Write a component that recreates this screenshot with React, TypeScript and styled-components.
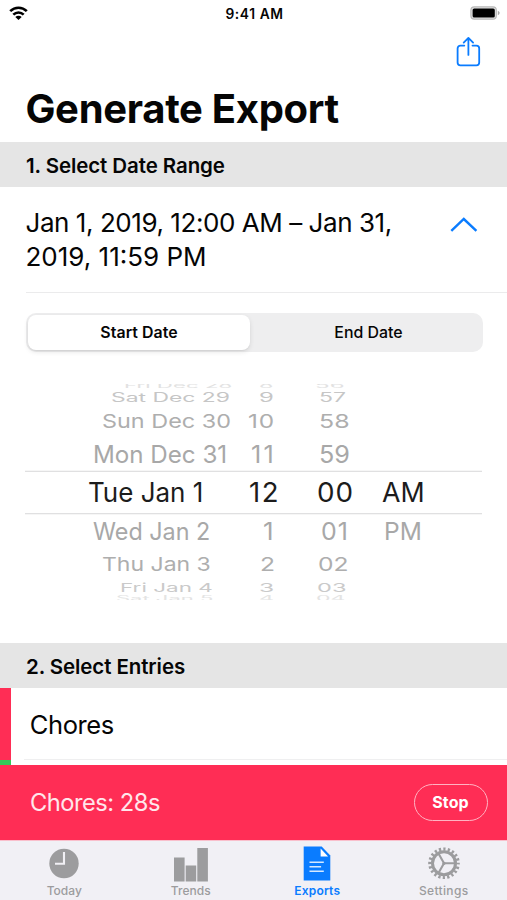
import React from "react";
import styled, { createGlobalStyle, css } from "styled-components";

const BLUE = "#0a7cff";
const RED = "#ff2d55";
const GRAY = "#9c9c9e";

const GlobalStyle = createGlobalStyle`
  *, *::before, *::after { box-sizing: border-box; }
  body {
    margin: 0;
    background: #fff;
    color: #050505;
    font-family: Inter, "Liberation Sans", sans-serif;
  }
  svg { display: block; }
  button { font: inherit; color: inherit; background: none; border: 0; padding: 0; }
`;

const Screen = styled.main`
  width: 507px;
  height: 900px;
  display: flex;
  flex-direction: column;
  overflow: hidden;
  background: #fff;
`;

const StatusBar = styled.div`
  flex: none;
  height: 28px;
  display: grid;
  grid-template-columns: 1fr auto 1fr;
  align-items: center;
  padding: 0 6px 0 9px;
`;

const Clock = styled.time`
  font-size: 13.8px;
  font-weight: 600;
  line-height: 28px;
  letter-spacing: 0.6px;
  padding-right: 1px;
`;

const BatterySlot = styled.div`
  justify-self: end;
  padding-bottom: 2px;
`;

const WifiSlot = styled.div`
  padding-bottom: 2px;
`;

const NavBar = styled.div`
  flex: none;
  height: 51px;
  display: flex;
  justify-content: flex-end;
  padding: 8px 25px 0 0;
`;

const IconButton = styled.button`
  width: 27px;
  height: 32px;
`;

const Title = styled.h1`
  flex: none;
  margin: 0;
  height: 63px;
  padding-left: 25.4px;
  font-size: 40px;
  font-weight: 700;
  letter-spacing: -0.3px;
  line-height: 59px;
`;

const SectionHeader = styled.h2<{ $height: number }>`
  flex: none;
  margin: 0;
  height: ${(p) => p.$height}px;
  padding-left: 26px;
  background: #e5e5e5;
  font-size: 20.5px;
  font-weight: 600;
  line-height: 47px;
  letter-spacing: -0.09px;
`;

const RangeRow = styled.div`
  flex: none;
  height: 106px;
  margin-left: 26px;
  padding: 19px 29px 0 0;
  display: flex;
  justify-content: space-between;
  border-bottom: 1px solid #ebebec;
`;

const RangeText = styled.div`
  font-size: 26px;
  line-height: 34.2px;
  white-space: nowrap;
  margin-left: -0.5px;
`;

const RangeLine = styled.div<{ $tracking: number }>`
  letter-spacing: ${(p) => p.$tracking}px;
`;

const ChevronSlot = styled.div`
  padding-top: 10px;
`;

const Segmented = styled.div`
  flex: none;
  height: 39px;
  margin: 20px 24px 0 26px;
  padding: 2px;
  display: grid;
  grid-template-columns: 222px 1fr;
  border-radius: 10px;
  background: #eeeeef;
`;

const Segment = styled.button<{ $active?: boolean }>`
  height: 35px;
  border-radius: 8px;
  font-size: 15.9px;
  font-weight: 500;
  letter-spacing: 0;
  line-height: 35px;
  text-align: center;
  padding-left: 6px;
  ${(p) =>
    p.$active &&
    css`
      background: #fff;
      padding-left: 0;
      font-weight: 600;
      letter-spacing: 0.05px;
      box-shadow: 0 2px 5px rgba(0, 0, 0, 0.1), 0 1px 1px rgba(0, 0, 0, 0.04);
    `}
`;

const Wheel = styled.div`
  flex: none;
  height: 216px;
  margin: 32px 25px 43px;
  overflow: hidden;
`;

const WheelRow = styled.div<{ $height: number; $squash: number; $tone: string; $selected?: boolean }>`
  height: ${(p) => p.$height}px;
  display: grid;
  grid-template-columns: 160px 70px 65px 1fr;
  padding-left: 55px;
  color: ${(p) => p.$tone};
  font-size: 26.5px;
  line-height: ${(p) => p.$height}px;
  white-space: nowrap;
  --squash: ${(p) => p.$squash};
  &:first-child { margin-top: -2px; }
  ${(p) =>
    p.$selected &&
    css`
      box-shadow: inset 0 1px #e0e0e1, inset 0 -1px #e0e0e1, 0 0 0 1px #f6f6f6;
    `}
`;

const WheelCell = styled.span<{ $inset: number; $stretch: number; $tracking?: number }>`
  justify-self: start;
  margin-left: ${(p) => p.$inset}px;
  letter-spacing: ${(p) => p.$tracking ?? 0}px;
  transform: scale(${(p) => p.$stretch}, var(--squash));
  transform-origin: left center;
`;

const EntryList = styled.div`
  flex: 1;
  min-height: 0;
  overflow: hidden;
`;

const Entry = styled.div<{ $color: string }>`
  height: 72px;
  display: flex;
  padding-left: 13px;
  border-left: 11px solid ${(p) => p.$color};
`;

const EntryName = styled.div`
  flex: 1;
  padding-left: 5.8px;
  border-bottom: 1px solid #efeff0;
  font-size: 25.5px;
  letter-spacing: -0.4px;
  line-height: 74px;
`;

const TimerBar = styled.div`
  flex: none;
  height: 75px;
  padding: 0 19px 0 30px;
  display: flex;
  align-items: center;
  justify-content: space-between;
  background: ${RED};
  color: #fff;
`;

const TimerText = styled.div`
  font-size: 23.7px;
  letter-spacing: -0.5px;
  color: #ffe6eb;
`;

const StopButton = styled.button`
  width: 74px;
  height: 37px;
  border: 1.5px solid #ffb3c2;
  border-radius: 19px;
  font-size: 16px;
  font-weight: 700;
  letter-spacing: 0.15px;
  line-height: 33px;
  text-align: center;
  padding-right: 1px;
`;

const TabBar = styled.nav`
  flex: none;
  height: 60px;
  display: grid;
  grid-template-columns: repeat(4, 126.5px);
  border-top: 1px solid #f9bfcc;
  background: #f1f0f5;
`;

const Tab = styled.div<{ $active?: boolean; $tracking: number }>`
  display: flex;
  flex-direction: column;
  align-items: center;
  padding: 5px 0 0 2px;
  color: ${(p) => (p.$active ? BLUE : GRAY)};
  font-size: 12px;
  font-weight: ${(p) => (p.$active ? 600 : 500)};
  letter-spacing: ${(p) => p.$tracking}px;
  line-height: 18px;
`;

const WifiIcon = () => (
  <svg width="19" height="14" viewBox="0 0 19 14" fill="none" stroke="#000" strokeWidth="2.6">
    <path d="M1.2 5.2C5.9.5 13.1.5 17.8 5.2" />
    <path d="M4.3 8.6c3-2.9 7.4-2.9 10.4 0" />
    <path d="M9.5 14 6.300 10.900c1.800-1.600 4.600-1.600 6.400 0Z" fill="#000" stroke="none" />
  </svg>
);

const BatteryIcon = () => (
  <svg width="31" height="14" viewBox="0 0 31 14">
    <rect x="0.9" y="0.8" width="25.4" height="12.4" rx="3.4" fill="#e4e4e4" stroke="#b9b9b9" strokeWidth="1.2" />
    <rect x="2.6" y="2.5" width="22.2" height="9" rx="1.6" fill="#000" />
    <path d="M27.8 4.8c2.4.8 2.4 3.6 0 4.4Z" fill="#aaa" />
  </svg>
);

const ShareIcon = () => (
  <svg width="27" height="32" viewBox="0 0 27 32" fill="none" stroke={BLUE} strokeWidth="1.8" strokeLinecap="round" strokeLinejoin="round">
    <path d="M9.3 9.6H5.4a2.8 2.8 0 0 0-2.8 2.8v14.2a2.8 2.8 0 0 0 2.8 2.8h16a2.8 2.8 0 0 0 2.8-2.8V12.4a2.8 2.8 0 0 0-2.8-2.8h-3.9" />
    <path d="M13.4 18.9V2.2M8.7 6.600l4.700-4.700 4.700 4.700" />
  </svg>
);

const ChevronUp = () => (
  <svg width="28" height="17" viewBox="0 0 28 17" fill="none" stroke={BLUE} strokeWidth="2.4">
    <path d="M1.300 14.800 13.800 3 26.400 14.800" />
  </svg>
);

const TodayIcon = () => (
  <svg width="34" height="36" viewBox="0 0 34 36">
    <circle cx="17" cy="17.500" r="14.700" fill={GRAY} />
    <path d="M17 6v11.700H8" fill="none" stroke="#f1f0f5" strokeWidth="2.100" />
  </svg>
);

const TrendsIcon = () => (
  <svg width="36" height="36" viewBox="0 0 36 36" fill={GRAY}>
    <path d="M1 11.500h10.600v24H1zM12.700 19.500h10.500v16H12.700zM24.300 2h10.600v33.500H24.300z" />
  </svg>
);

const ExportsIcon = () => (
  <svg width="28" height="36" viewBox="0 0 28 36">
    <path d="M.7.500h18L27.300 9.500v25H.700Z" fill={BLUE} />
    <path d="M17.600 2.600v7.900h7.500Z" fill="#fff" />
    <path d="M6.500 16.200h14.300M6.500 20.800h11.600M6.500 25.200h14.300" stroke="#d5e9ff" strokeWidth="1.400" />
  </svg>
);

const SettingsIcon = () => (
  <svg width="34" height="36" viewBox="0 0 34 36" fill="none" stroke={GRAY}>
    <circle cx="17" cy="17.300" r="11.500" strokeWidth="3" />
    <circle cx="17" cy="17.300" r="14.200" strokeWidth="3.200" strokeDasharray="2.230 2.230" strokeDashoffset="1.100" />
    <path d="M17 17.300h11M17 17.300l-5.500-9.700M17 17.300l-5.500 9.700" strokeWidth="2.100" />
    <circle cx="17" cy="17.300" r="1.600" fill={GRAY} stroke="none" />
  </svg>
);

type Cell = { text: string; inset: number; stretch: number; tracking?: number };
type Row = { height: number; squash: number; tone: string; selected?: boolean; cells: Cell[] };

const cell = (text: string, inset: number, stretch: number, tracking = 0): Cell => ({ text, inset, stretch, tracking });

const wheelRows: Row[] = [
  { height: 7, squash: 0.26, tone: "#e2e2e2", cells: [cell("Fri Dec 28", 44, 0.84), cell("8", 18.8, 0.88), cell("56", 4.8, 0.91)] },
  { height: 17, squash: 0.47, tone: "#c6c6c6", cells: [cell("Sat Dec 29", 31.3, 0.864), cell("9", 18.8, 0.9), cell("57", 8.5, 0.87)] },
  { height: 31, squash: 0.72, tone: "#aeaeae", cells: [cell("Sun Dec 30", 22.1, 0.883), cell("10", 7.8, 0.92, 0.8), cell("58", 8.6, 0.94)] },
  { height: 34, squash: 0.9, tone: "#a8a8a8", cells: [cell("Mon Dec 31", 12.9, 0.911), cell("11", 11.2, 0.95, 2.5), cell("59", 9.2, 0.95)] },
  {
    height: 43,
    squash: 1,
    tone: "#1c1c1c",
    selected: true,
    cells: [cell("Tue Jan 1", 8, 0.98), cell("12", 9, 1.04, 1.5), cell("00", 7, 1.05, 0.8), cell("AM", 7.4, 1.01)],
  },
  { height: 35, squash: 0.9, tone: "#a8a8a8", cells: [cell("Wed Jan 2", 12.5, 0.88), cell("1", 23.4, 0.98), cell("01", 11.2, 0.94, 1), cell("PM", 9.4, 0.925)] },
  { height: 30, squash: 0.72, tone: "#aeaeae", cells: [cell("Thu Jan 3", 22.3, 0.868), cell("2", 19.5, 0.93), cell("02", 8, 0.93)] },
  { height: 16, squash: 0.46, tone: "#cacaca", cells: [cell("Fri Jan 4", 40.2, 0.848), cell("3", 18.5, 0.93), cell("03", 7, 0.89)] },
  { height: 7, squash: 0.26, tone: "#e4e4e4", cells: [cell("Sat Jan 5", 36, 0.83), cell("4", 18.5, 0.88), cell("04", 5.5, 0.87)] },
];

export default function App() {
  return (
    <>
      <GlobalStyle />
      <Screen>
        <StatusBar>
          <WifiSlot><WifiIcon /></WifiSlot>
          <Clock>9:41 AM</Clock>
          <BatterySlot><BatteryIcon /></BatterySlot>
        </StatusBar>
        <NavBar>
          <IconButton aria-label="Share"><ShareIcon /></IconButton>
        </NavBar>
        <Title>Generate Export</Title>
        <SectionHeader $height={45}>1. Select Date Range</SectionHeader>
        <RangeRow>
          <RangeText>
            <RangeLine $tracking={-0.44}>Jan 1, 2019, 12:00 AM – Jan 31,</RangeLine>
            <RangeLine $tracking={0}>2019, 11:59 PM</RangeLine>
          </RangeText>
          <ChevronSlot><ChevronUp /></ChevronSlot>
        </RangeRow>
        <Segmented>
          <Segment $active>Start Date</Segment>
          <Segment>End Date</Segment>
        </Segmented>
        <Wheel>
          {wheelRows.map((row) => (
            <WheelRow key={row.cells[0].text} $height={row.height} $squash={row.squash} $tone={row.tone} $selected={row.selected}>
              {row.cells.map((c) => (
                <WheelCell key={c.text} $inset={c.inset} $stretch={c.stretch} $tracking={c.tracking}>{c.text}</WheelCell>
              ))}
            </WheelRow>
          ))}
        </Wheel>
        <SectionHeader $height={45}>2. Select Entries</SectionHeader>
        <EntryList>
          <Entry $color={RED}><EntryName>Chores</EntryName></Entry>
          <Entry $color="#34c759" />
        </EntryList>
        <TimerBar>
          <TimerText>Chores: 28s</TimerText>
          <StopButton>Stop</StopButton>
        </TimerBar>
        <TabBar>
          <Tab $tracking={0}><TodayIcon />Today</Tab>
          <Tab $tracking={0.05}><TrendsIcon />Trends</Tab>
          <Tab $active $tracking={0.2}><ExportsIcon />Exports</Tab>
          <Tab $tracking={0.35}><SettingsIcon />Settings</Tab>
        </TabBar>
      </Screen>
    </>
  );
}
